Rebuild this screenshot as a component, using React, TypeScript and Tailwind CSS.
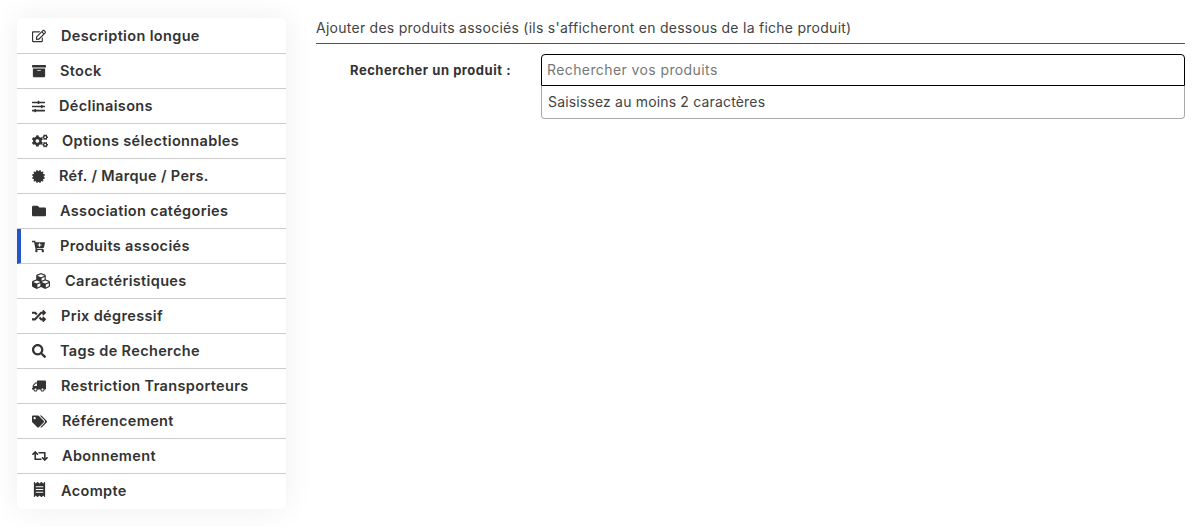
import React from "react";
import { FaRegEdit, FaArchive, FaSlidersH, FaCogs, FaCertificate, FaFolder, FaCartPlus, FaCubes, FaRandom, FaSearch, FaTruck, FaTags, FaRetweet, FaReceipt } from "react-icons/fa";

const items = [
  { Icon: FaRegEdit, label: "Description longue", size: 14, box: "w-[29px]" },
  { Icon: FaArchive, label: "Stock", size: 14, box: "w-[28px]" },
  { Icon: FaSlidersH, label: "Déclinaisons", size: 13, box: "w-[27px]" },
  { Icon: FaCogs, label: "Options sélectionnables", size: 16, box: "w-[30px]" },
  { Icon: FaCertificate, label: "Réf. / Marque / Pers.", size: 13, box: "w-[27px]" },
  { Icon: FaFolder, label: "Association catégories", size: 14, box: "w-[28px]" },
  { Icon: FaCartPlus, label: "Produits associés", size: 13, box: "w-[28px]", active: true },
  { Icon: FaCubes, label: "Caractéristiques", size: 18, box: "w-[33px]" },
  { Icon: FaRandom, label: "Prix dégressif", size: 14, box: "w-[29px]" },
  { Icon: FaSearch, label: "Tags de Recherche", size: 14, box: "w-[28px]" },
  { Icon: FaTruck, label: "Restriction Transporteurs", size: 14, box: "w-[29px]", flip: true },
  { Icon: FaTags, label: "Référencement", size: 15, box: "w-[30px]" },
  { Icon: FaRetweet, label: "Abonnement", size: 16, box: "w-[30px]" },
  { Icon: FaReceipt, label: "Acompte", size: 15, box: "w-[29px]", raised: true },
];

export default function App() {
  return (
    <div className="flex h-[527px] w-[1196px] overflow-hidden bg-white pl-[17px] pr-[11px] pt-[18px] font-['Inter',sans-serif] text-[#333]">
      <ul className="h-[491px] w-[269px] shrink-0 overflow-hidden rounded-md bg-white pt-px shadow-[0_0_30px_rgba(0,0,0,0.07)]">
        {items.map(({ Icon, label, size, box, active, flip, raised }, i) => (
          <li
            key={label}
            className={`flex h-[35px] items-center border-b ${i < items.length - 1 ? "border-[#cccccc]" : "border-transparent"} ${active ? "border-l-4 border-l-[#2456c8] pl-[11px]" : "pl-[15px]"}`}
          >
            <span className={`flex shrink-0 items-center justify-start ${box} ${raised ? "pb-[4px]" : ""}`}>
              <Icon size={size} className={`shrink-0 text-[#333] ${flip ? "-scale-x-100" : ""}`} />
            </span>
            <span className="text-[14.5px] font-semibold tracking-[0.35px] whitespace-nowrap">{label}</span>
          </li>
        ))}
      </ul>
      <main className="ml-[30px] flex-1">
        <h2 className="h-[26px] border-b border-[#2a55a8] text-[14px] leading-[20px] font-normal tracking-[0.26px] whitespace-nowrap text-[#444]">
          Ajouter des produits associés (ils s'afficheront en dessous de la fiche produit)
        </h2>
        <div className="mt-[10px] flex">
          <label className="w-[225px] pt-[7px] pl-[34px] text-[13px] leading-[18px] font-bold tracking-[0.53px] whitespace-nowrap">
            Rechercher un produit :
          </label>
          <div className="flex-1">
            <div className="flex h-[32px] items-center rounded-t border border-black pb-[2px] pl-[5px] text-[14px] tracking-[0.4px] text-[#777]">
              Rechercher vos produits
            </div>
            <div className="flex h-[33px] items-center rounded-b border border-t-0 border-[#aaaaaa] pb-[2px] pl-[6px] text-[14px] tracking-[0.17px] text-[#444]">
              Saisissez au moins 2 caractères
            </div>
          </div>
        </div>
      </main>
    </div>
  );
}
